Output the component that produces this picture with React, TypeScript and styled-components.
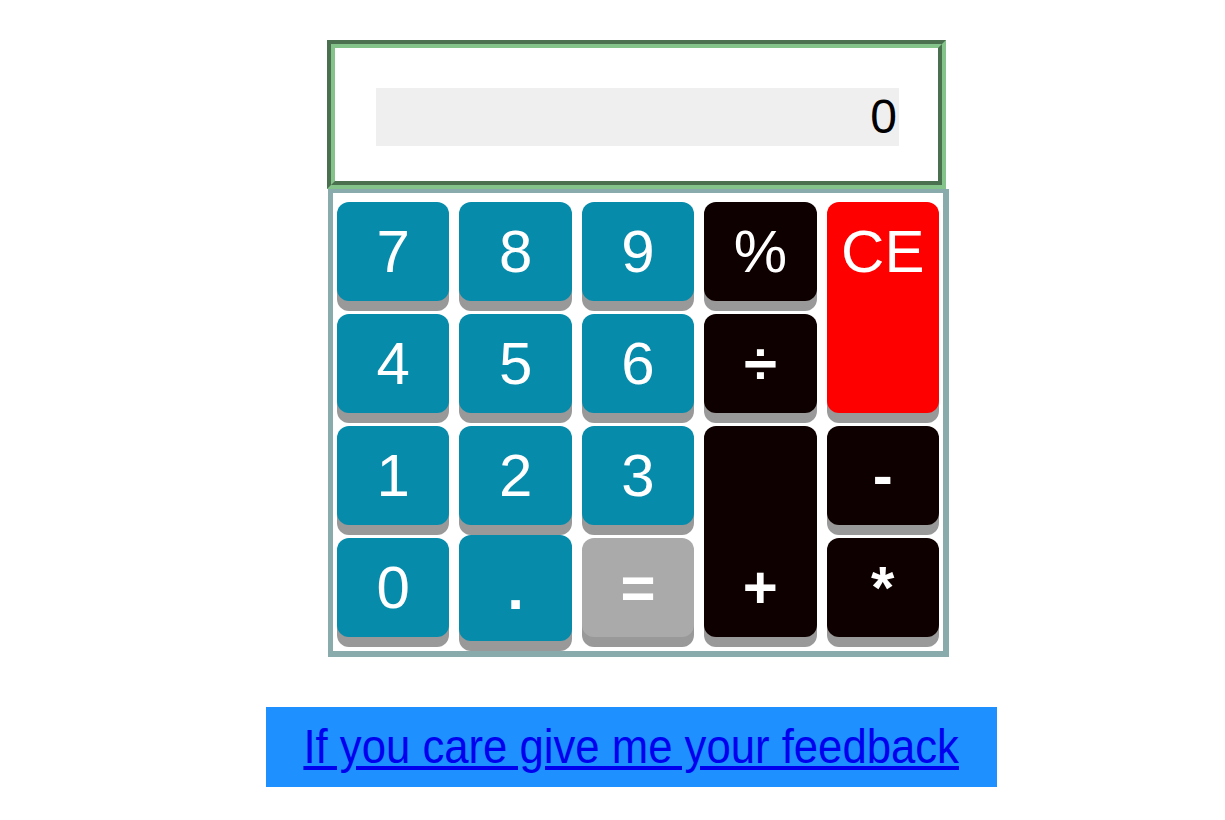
import React from "react";
import styled, { createGlobalStyle, css } from "styled-components";

const GlobalStyle = createGlobalStyle`
  html, body {
    margin: 0;
    padding: 0;
    background: #ffffff;
    font-family: "Liberation Sans", Arial, sans-serif;
  }
`;

const Page = styled.div`
  display: flex;
  flex-direction: column;
  align-items: flex-start;
  padding-top: 40px;
`;

const Calculator = styled.div`
  display: flex;
  flex-direction: column;
  margin-left: 327px;
`;

const DisplayFrame = styled.div`
  box-sizing: border-box;
  width: 619px;
  height: 149px;
  border: 8px groove #84c48a;
  background: #ffffff;
  padding: 40px 39px 35px 41px;
`;

const Screen = styled.div`
  box-sizing: border-box;
  height: 58px;
  background: #efefef;
  color: #000000;
  font-family: "Liberation Sans", Arial, sans-serif;
  font-size: 48px;
  line-height: 58px;
  text-align: right;
  padding-right: 2px;
`;

const Keypad = styled.div`
  box-sizing: border-box;
  width: 621px;
  margin-left: 1px;
  border-style: solid;
  border-color: #8aabab;
  border-width: 4px 6px 6px 5px;
  background: #ffffff;
  padding: 9px 4px 14px 4px;
  display: grid;
  grid-template-columns: repeat(5, 1fr);
  grid-template-rows: repeat(4, 99px);
  column-gap: 10px;
  row-gap: 13px;
`;

type Tone = "num" | "op" | "clear" | "equals";

const toneColors: Record<Tone, string> = {
  num: "#068bab",
  op: "#0f0000",
  clear: "#ff0000",
  equals: "#aaaaaa",
};

const Key = styled.button<{
  $tone: Tone;
  $bold?: boolean;
  $rows?: number;
  $labelAt?: "start" | "end";
  $raised?: boolean;
}>`
  grid-row: span ${(p) => p.$rows ?? 1};
  display: flex;
  flex-direction: column;
  justify-content: ${(p) =>
    p.$labelAt === "end" ? "flex-end" : p.$labelAt === "start" ? "flex-start" : "center"};
  align-items: center;
  border: none;
  border-radius: 12px;
  padding: 0;
  margin: 0;
  background: ${(p) => toneColors[p.$tone]};
  color: #ffffff;
  box-shadow: 0 10px #999999;
  font-family: "Liberation Sans", Arial, sans-serif;
  font-size: 60px;
  font-weight: ${(p) => (p.$bold ? 700 : 400)};
  cursor: pointer;
  ${(p) =>
    p.$raised &&
    css`
      margin: -3px 0 -4px 0;
    `}
`;

const KeyLabel = styled.span`
  display: block;
  height: 99px;
  line-height: 99px;
`;

const FeedbackBox = styled.div`
  box-sizing: border-box;
  width: 731px;
  height: 80px;
  margin: 50px 0 0 266px;
  background: #1e90ff;
  display: flex;
  align-items: center;
  justify-content: center;
`;

const FeedbackLink = styled.a`
  display: inline-block;
  color: #0000ee;
  text-decoration: underline;
  font-family: "Liberation Sans", Arial, sans-serif;
  font-size: 48px;
  line-height: 58px;
  white-space: nowrap;
  transform: scaleX(0.91);
`;

type KeyDef = {
  label: string;
  tone: Tone;
  bold?: boolean;
  rows?: number;
  labelAt?: "start" | "end";
  raised?: boolean;
};

const keys: KeyDef[] = [
  { label: "7", tone: "num" },
  { label: "8", tone: "num" },
  { label: "9", tone: "num" },
  { label: "%", tone: "op" },
  { label: "CE", tone: "clear", rows: 2, labelAt: "start" },
  { label: "4", tone: "num" },
  { label: "5", tone: "num" },
  { label: "6", tone: "num" },
  { label: "÷", tone: "op", bold: true },
  { label: "1", tone: "num" },
  { label: "2", tone: "num" },
  { label: "3", tone: "num" },
  { label: "+", tone: "op", bold: true, rows: 2, labelAt: "end" },
  { label: "-", tone: "op", bold: true },
  { label: "0", tone: "num" },
  { label: ".", tone: "num", bold: true, raised: true },
  { label: "=", tone: "equals", bold: true },
  { label: "*", tone: "op", bold: true },
];

export default function App() {
  return (
    <>
      <GlobalStyle />
      <Page>
        <Calculator>
          <DisplayFrame>
            <Screen>0</Screen>
          </DisplayFrame>
          <Keypad>
            {keys.map((k) => (
              <Key
                key={k.label}
                $tone={k.tone}
                $bold={k.bold}
                $rows={k.rows}
                $labelAt={k.labelAt}
                $raised={k.raised}
              >
                <KeyLabel>{k.label}</KeyLabel>
              </Key>
            ))}
          </Keypad>
        </Calculator>
        <FeedbackBox>
          <FeedbackLink href="#">If you care give me your feedback</FeedbackLink>
        </FeedbackBox>
      </Page>
    </>
  );
}
